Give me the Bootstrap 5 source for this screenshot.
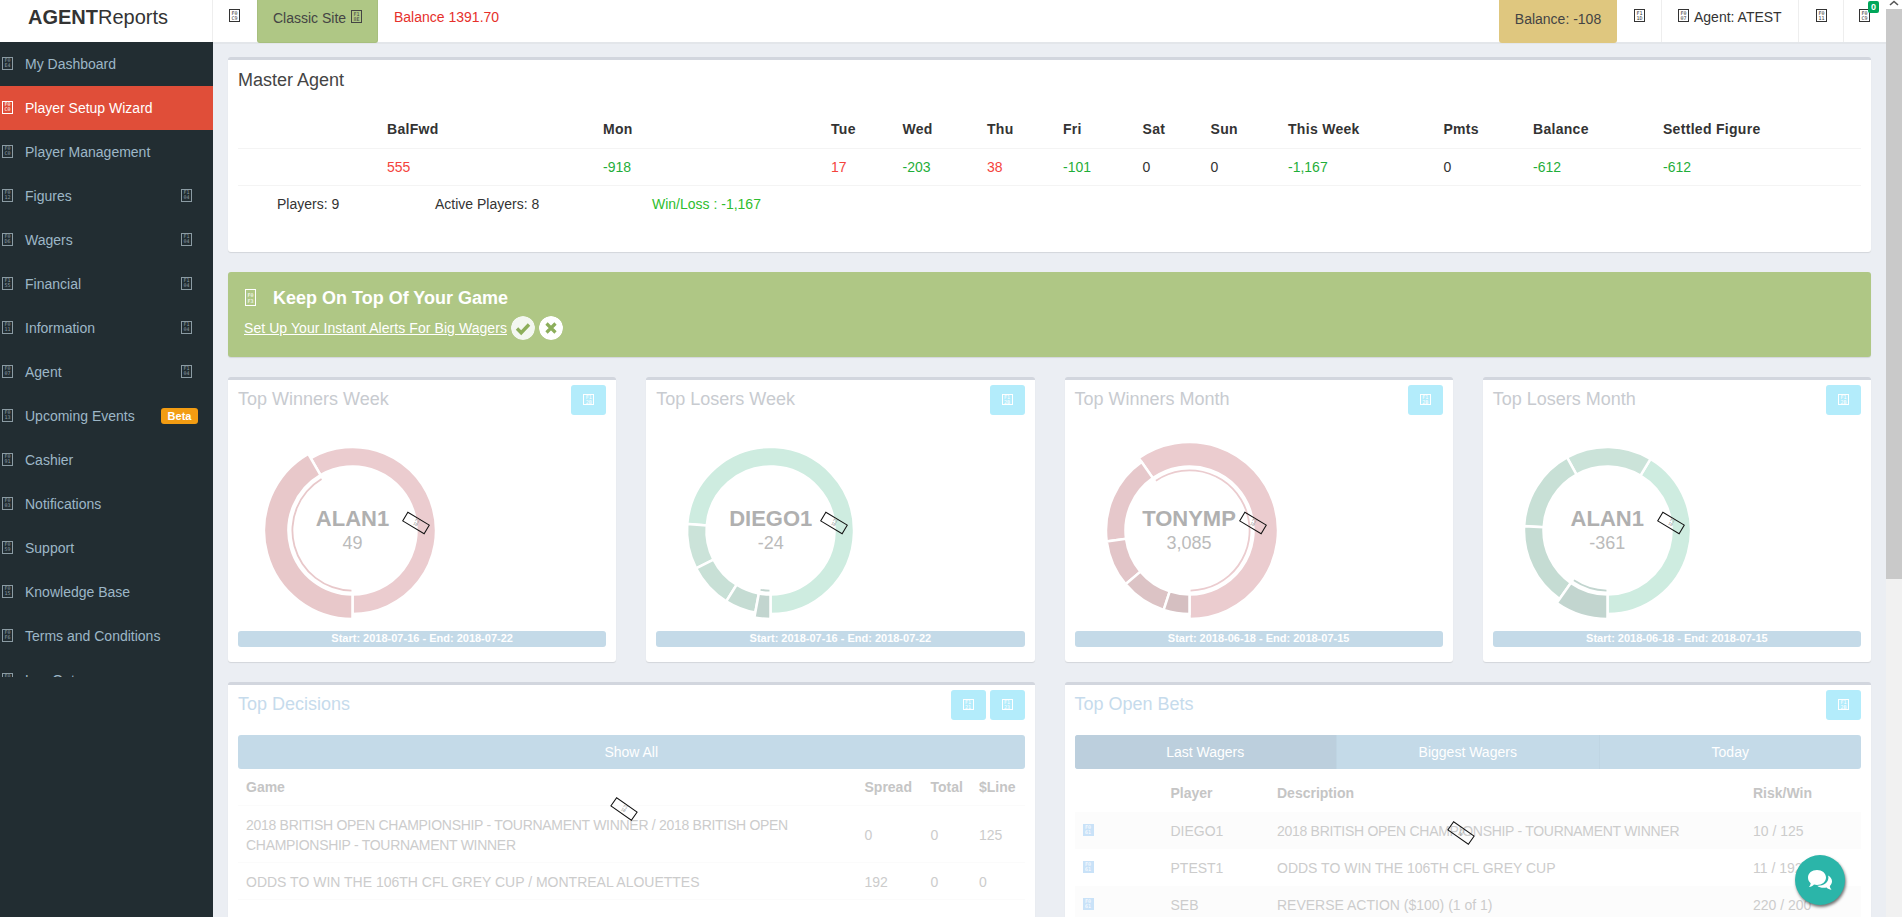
<!DOCTYPE html>
<html lang="en">
<head>
    <meta charset="UTF-8">
    <meta name="viewport" content="width=device-width, initial-scale=1.0">
    <title>AgentReports</title>
    <link href="https://cdn.jsdelivr.net/npm/bootstrap@5.3.3/dist/css/bootstrap.min.css" rel="stylesheet">
    <style>
        html, body { height: 100%; overflow: hidden; }
        body { font-family: "Liberation Sans", Arial, sans-serif; font-size: 14px; line-height: 20px; color: #333; background: #ebeef3; }

        /* missing icon font boxes */
        .tofu { display: inline-block; width: 11px; height: 13px; padding-top: .5px; border: 1px solid currentColor; font: 5px/5px "DejaVu Sans Mono", monospace; text-align: center; overflow: hidden; flex: none; }
        .tofu-flat { height: 11px; padding-top: 0; line-height: 4.5px; }
        .tofu-tall { height: 17px; padding-top: 3px; line-height: 5.5px; }

        .side-col { width: 213px; flex: none; background: #222d32; }
        .brand-box { height: 42px; background: #fff; font-size: 20px; line-height: 34px; padding-left: 28px; color: #333; border-right: 1px solid #eee; }
        .side-nav { height: 635px; overflow: hidden; }
        .side-link { height: 44px; flex: none; padding: 0 21px 0 2px; color: #9db7c7; gap: 12px; text-decoration: none; }
        .side-link.active-link { background: #e04e39; color: #fff; }
        .side-link .tofu { color: #8b9ba3; margin-bottom: 2px; }
        .side-link.active-link .tofu { color: #fff; }
        .beta-tag { background: #f39c12; color: #fff; font-size: 11px; font-weight: 700; line-height: 16px; width: 37px; text-align: center; border-radius: 3px; margin-right: -6px; }

        .top-bar { height: 44px; background: #fff; border-bottom: 2px solid #e3e6ea; flex: none; }
        .top-cell { height: 42px; width: 45px; padding: 0 0 8px 17px; gap: 5px; }
        .top-cell .tofu { margin-bottom: 3px; }
        .menu-cell { width: 44px; padding-left: 16px; }
        .agent-cell { width: 137px; padding-left: 16px; }
        .last-cell { width: 42px; padding-left: 15px; }
        .top-sep { border-right: 1px solid #eee; }
        .classic-btn { width: 121px; height: 43px; background: #afc785; border: 1px solid #a7bf7e; border-top: 0; border-radius: 0 0 3px 3px; color: #444; gap: 5px; padding-bottom: 6px; }
        .classic-btn .tofu { margin-bottom: 3px; }
        .bal-red { color: #e6302b; margin-left: 16px; padding-bottom: 8px; }
        .bal-box { width: 118px; height: 43px; background: #dfc77f; color: #444; border-radius: 0 0 3px 3px; padding-bottom: 6px; }
        .note-count { position: absolute; left: 24px; top: 1px; width: 11px; height: 12px; background: #00a65a; color: #fff; font-size: 9px; font-weight: 700; line-height: 12px; text-align: center; border-radius: 2px; }

        .page-body { padding: 13px 15px 0; overflow: hidden; flex: 1 1 auto; }
        .fake-scroll { width: 16px; flex: none; background: #f1f1f1; }
        .scroll-head { height: 9px; background: #fff; color: #666; }
        .scroll-thumb { height: 570px; background: #c9c9c9; }

        .box-card { --bs-card-border-width: 0; --bs-card-border-radius: 3px; --bs-card-inner-border-radius: 3px; border-top: 3px solid #d2d6de; box-shadow: 0 1px 1px rgba(0,0,0,.1); margin-bottom: 20px; padding: 10px; }
        .tool-card { padding-top: 5px; }
        .box-title { font-size: 18px; line-height: 20px; color: #444; }
        .pale-title { color: #c8cbd0; line-height: 28px; }
        .blue-title { color: #c6dbec; line-height: 28px; }

        .ma-table { margin: 21px 0 0; table-layout: fixed; width: 100%; }
        .ma-table th, .ma-table td { padding: 8px; height: 37px; color: #333; border-bottom: 1px solid #f4f4f4; }
        .ma-table th { letter-spacing: .3px; }
        .ma-table th:nth-child(1) { width: 141px; }
        .ma-table th:nth-child(2) { width: 216px; }
        .ma-table th:nth-child(3) { width: 228px; }
        .ma-table th:nth-child(4) { width: 71.5px; }
        .ma-table th:nth-child(5) { width: 84.5px; }
        .ma-table th:nth-child(6) { width: 76px; }
        .ma-table th:nth-child(7) { width: 79.6px; }
        .ma-table th:nth-child(8) { width: 68px; }
        .ma-table th:nth-child(9) { width: 77.4px; }
        .ma-table th:nth-child(10) { width: 155.5px; }
        .ma-table th:nth-child(11) { width: 89.5px; }
        .ma-table th:nth-child(12) { width: 130px; }
        .ma-table td.fig-red { color: #f4433c; }
        .ma-table td.fig-green { color: #1fae3a; }
        .ma-foot { margin-top: 8px; padding-left: 39px; padding-bottom: 28px; }
        .ma-foot span:nth-child(1) { width: 158px; }
        .ma-foot span:nth-child(2) { width: 217px; }
        .win-loss { color: #2ebd2e; }

        .promo-strip { background: #afc785; color: #fff; height: 85px; border-radius: 3px; margin-bottom: 20px; padding: 15px 16px; box-shadow: 0 1px 1px rgba(0,0,0,.1); }
        .promo-head { font-size: 18px; font-weight: 700; line-height: 22px; gap: 17px; padding-left: 1px; }
        .promo-link { color: #fff; text-decoration: underline; letter-spacing: .07px; }
        .promo-row { margin-top: 7px; gap: 4px; }
        .round-mark { width: 24px; height: 24px; border-radius: 50%; flex: none; }

        .dash-row { --bs-gutter-x: 30px; --bs-gutter-y: 0; }
        .tool-btn { width: 35px; height: 30px; background: #b3ecfb; border-radius: 3px; color: #fff; }
        .donut-wrap { position: relative; width: 229px; height: 216px; }
        .donut-name { position: absolute; left: 0; right: 0; top: 92px; text-align: center; font-size: 22px; font-weight: 700; line-height: 24px; color: #b0b0b0; }
        .donut-val { position: absolute; left: 0; right: 0; top: 116px; text-align: center; font-size: 18px; line-height: 24px; color: #bbb; }
        .date-bar { background: #c4dae8; color: #fff; height: 16px; margin-bottom: 5px; border-radius: 3px; text-align: center; font-size: 11px; font-weight: 700; line-height: 14px; }
        .spin-box { position: absolute; width: 26px; height: 11px; border: 1px solid #111; transform: translate(-50%, -50%) rotate(31deg); font: 4px/4px "DejaVu Sans Mono", monospace; color: #888; text-align: center; }
        .spin-a { left: 188px; top: 143px; }
        .spin-b { left: 396px; top: 124px; transform: translate(-50%, -50%) rotate(35deg); }
        .spin-c { left: 396px; top: 148px; transform: translate(-50%, -50%) rotate(35deg); }

        .wide-card { height: 400px; }
        .wide-bar { background: #c4dae8; color: #fff; height: 34px; margin-top: 15px; border-radius: 3px; line-height: 34px; text-align: center; overflow: hidden; }
        .wide-tab { flex: 1 1 0; border-left: 1px solid #bfd5e3; }
        .wide-tab:first-child { background: #bccfdd; border-left: 0; }
        .fade-table { table-layout: fixed; width: 100%; margin: 0; }
        .fade-table th, .fade-table td { padding: 8px; height: 37px; border-bottom: 1px solid #fbfbfb; color: #ccc; font-weight: 400; }
        .fade-table td { padding-top: 9px; padding-bottom: 7px; }
        .fade-table th { color: #c5c5c5; font-weight: 700; }
        .fade-table td.tight-text { letter-spacing: -.29px; }
        .dec-table th:nth-child(2) { width: 66px; }
        .dec-table th:nth-child(3) { width: 48.5px; }
        .dec-table th:nth-child(4) { width: 53.5px; }
        .bets-table { margin-top: 6px; }
        .bets-table th:nth-child(1) { width: 88px; }
        .bets-table th:nth-child(2) { width: 106.5px; }
        .bets-table th:nth-child(4) { width: 116px; }
        .bets-table th, .bets-table td { border-bottom: 0; }
        .bets-table tbody tr:nth-child(odd) td { background: #fcfcfc; }
        .bet-mark { color: #fff; background: #c9e2f8; border-color: #c9e2f8; height: 12px; padding-top: 0; }

        .chat-float { position: absolute; left: 1795px; top: 855px; width: 50px; height: 50px; border-radius: 50%; background: #2bb5a9; box-shadow: 1px 2px 3px rgba(0,0,0,.55); }
    </style>
</head>
<body>
<div class="d-flex vh-100 overflow-hidden">
    <aside class="side-col">
        <div class="brand-box"><b>AGENT</b>Reports</div>
        <nav class="side-nav d-flex flex-column">
            <a class="side-link d-flex align-items-center" href="#"><span class="tofu">F0<br>E4</span>My Dashboard</a>
            <a class="side-link active-link d-flex align-items-center" href="#"><span class="tofu">F0<br>C0</span>Player Setup Wizard</a>
            <a class="side-link d-flex align-items-center" href="#"><span class="tofu">F0<br>C0</span>Player Management</a>
            <a class="side-link d-flex align-items-center" href="#"><span class="tofu">F0<br>12</span>Figures<span class="tofu ms-auto">F1<br>04</span></a>
            <a class="side-link d-flex align-items-center" href="#"><span class="tofu">F0<br>D6</span>Wagers<span class="tofu ms-auto">F1<br>04</span></a>
            <a class="side-link d-flex align-items-center" href="#"><span class="tofu">F1<br>55</span>Financial<span class="tofu ms-auto">F1<br>04</span></a>
            <a class="side-link d-flex align-items-center" href="#"><span class="tofu">F0<br>11</span>Information<span class="tofu ms-auto">F1<br>04</span></a>
            <a class="side-link d-flex align-items-center" href="#"><span class="tofu">F0<br>07</span>Agent<span class="tofu ms-auto">F1<br>04</span></a>
            <a class="side-link d-flex align-items-center" href="#"><span class="tofu">F0<br>13</span>Upcoming Events<span class="beta-tag ms-auto">Beta</span></a>
            <a class="side-link d-flex align-items-center" href="#"><span class="tofu">F0<br>91</span>Cashier</a>
            <a class="side-link d-flex align-items-center" href="#"><span class="tofu">F0<br>03</span>Notifications</a>
            <a class="side-link d-flex align-items-center" href="#"><span class="tofu">F0<br>59</span>Support</a>
            <a class="side-link d-flex align-items-center" href="#"><span class="tofu">F0<br>15</span>Knowledge Base</a>
            <a class="side-link d-flex align-items-center" href="#"><span class="tofu">F0<br>F6</span>Terms and Conditions</a>
            <a class="side-link d-flex align-items-center" href="#"><span class="tofu">F0<br>8B</span>Log Out</a>
        </nav>
    </aside>

    <div class="d-flex flex-column flex-grow-1 overflow-hidden">
        <header class="top-bar d-flex">
            <div class="top-cell menu-cell d-flex align-items-center"><span class="tofu">F0<br>C9</span></div>
            <div class="classic-btn d-flex align-items-center justify-content-center">Classic Site <span class="tofu">F1<br>8E</span></div>
            <div class="bal-red d-flex align-items-center">Balance 1391.70</div>
            <div class="bal-box d-flex align-items-center justify-content-center ms-auto">Balance: -108</div>
            <div class="top-cell top-sep d-flex align-items-center"><span class="tofu">F1<br>1D</span></div>
            <div class="top-cell agent-cell top-sep d-flex align-items-center"><span class="tofu">F0<br>07</span>Agent: ATEST</div>
            <div class="top-cell top-sep d-flex align-items-center"><span class="tofu">F0<br>11</span></div>
            <div class="top-cell last-cell d-flex align-items-center position-relative"><span class="tofu">F0<br>C9</span><span class="note-count">0</span></div>
        </header>

        <main class="page-body position-relative">
            <section class="card box-card">
                <div class="box-title">Master Agent</div>
                <table class="ma-table">
                    <thead>
                        <tr><th></th><th>BalFwd</th><th>Mon</th><th>Tue</th><th>Wed</th><th>Thu</th><th>Fri</th><th>Sat</th><th>Sun</th><th>This Week</th><th>Pmts</th><th>Balance</th><th>Settled Figure</th></tr>
                    </thead>
                    <tbody>
                        <tr><td></td><td class="fig-red">555</td><td class="fig-green">-918</td><td class="fig-red">17</td><td class="fig-green">-203</td><td class="fig-red">38</td><td class="fig-green">-101</td><td>0</td><td>0</td><td class="fig-green">-1,167</td><td>0</td><td class="fig-green">-612</td><td class="fig-green">-612</td></tr>
                    </tbody>
                </table>
                <div class="ma-foot d-flex">
                    <span>Players: 9</span>
                    <span>Active Players: 8</span>
                    <span class="win-loss">Win/Loss : -1,167</span>
                </div>
            </section>

            <section class="promo-strip">
                <div class="promo-head d-flex align-items-center"><span class="tofu tofu-tall">F0<br>F3</span>Keep On Top Of Your Game</div>
                <div class="promo-row d-flex align-items-center">
                    <a class="promo-link" href="#">Set Up Your Instant Alerts For Big Wagers</a>
                    <svg class="round-mark" viewBox="0 0 24 24"><circle cx="12" cy="12" r="12" fill="#f3f7f1"/><path d="M6 12.500l4.200 4.200L18 8.500" fill="none" stroke="#8cae5b" stroke-width="3.400"/></svg>
                    <svg class="round-mark" viewBox="0 0 24 24"><circle cx="12" cy="12" r="12" fill="#fff"/><path d="M7.500 7.500l9 9M16.500 7.500l-9 9" fill="none" stroke="#8cae5b" stroke-width="3.200"/></svg>
                </div>
            </section>

            <div class="row dash-row" id="donut-row"></div>

            <div class="row dash-row">
                <div class="col-6">
                    <section class="card box-card tool-card wide-card position-relative">
                        <div class="d-flex justify-content-between">
                            <div class="box-title blue-title">Top Decisions</div>
                            <div class="d-flex gap-1">
                                <div class="tool-btn d-flex align-items-center justify-content-center"><span class="tofu tofu-flat">F1<br>21</span></div>
                                <div class="tool-btn d-flex align-items-center justify-content-center"><span class="tofu tofu-flat">F1<br>23</span></div>
                            </div>
                        </div>
                        <div class="wide-bar">Show All</div>
                        <table class="fade-table dec-table">
                            <thead><tr><th>Game</th><th>Spread</th><th>Total</th><th>$Line</th></tr></thead>
                            <tbody>
                                <tr><td class="tight-text">2018 BRITISH OPEN CHAMPIONSHIP - TOURNAMENT WINNER / 2018 BRITISH OPEN CHAMPIONSHIP - TOURNAMENT WINNER</td><td>0</td><td>0</td><td>125</td></tr>
                                <tr><td>ODDS TO WIN THE 106TH CFL GREY CUP / MONTREAL ALOUETTES</td><td>192</td><td>0</td><td>0</td></tr>
                            </tbody>
                        </table>
                        <span class="spin-box spin-b">F1<br>10</span>
                    </section>
                </div>
                <div class="col-6">
                    <section class="card box-card tool-card wide-card position-relative">
                        <div class="d-flex justify-content-between">
                            <div class="box-title blue-title">Top Open Bets</div>
                            <div class="tool-btn d-flex align-items-center justify-content-center"><span class="tofu tofu-flat">F1<br>2B</span></div>
                        </div>
                        <div class="wide-bar d-flex">
                            <div class="wide-tab">Last Wagers</div>
                            <div class="wide-tab">Biggest Wagers</div>
                            <div class="wide-tab">Today</div>
                        </div>
                        <table class="fade-table bets-table">
                            <thead><tr><th></th><th>Player</th><th>Description</th><th>Risk/Win</th></tr></thead>
                            <tbody>
                                <tr><td><span class="tofu bet-mark">F0<br>61</span></td><td>DIEGO1</td><td class="tight-text">2018 BRITISH OPEN CHAMPIONSHIP - TOURNAMENT WINNER</td><td>10 / 125</td></tr>
                                <tr><td><span class="tofu bet-mark">F0<br>61</span></td><td>PTEST1</td><td>ODDS TO WIN THE 106TH CFL GREY CUP</td><td>11 / 192</td></tr>
                                <tr><td><span class="tofu bet-mark">F0<br>61</span></td><td>SEB</td><td>REVERSE ACTION ($100) (1 of 1)</td><td>220 / 200</td></tr>
                            </tbody>
                        </table>
                        <span class="spin-box spin-c">F1<br>10</span>
                    </section>
                </div>
            </div>
        </main>
    </div>

    <div class="fake-scroll">
        <div class="scroll-head d-flex justify-content-center"><svg width="10" height="6" viewBox="0 0 10 6"><path d="M1 5l4-3.500L9 5" fill="none" stroke="#555" stroke-width="1.600"/></svg></div>
        <div class="scroll-thumb"></div>
    </div>

    <div class="chat-float d-flex align-items-center justify-content-center">
        <svg width="28" height="26" viewBox="0 0 28 26">
            <path d="M11 3c5 0 9 3 9 7.500S16 18 11 18c-1 0-2-.1-3-.4C6.800 19 5 20 3 20c1-1.200 1.600-2.500 1.700-3.800C3 14.800 2 12.800 2 10.500 2 6 6 3 11 3z" fill="#fff"/>
            <path d="M22 8.500c2.400 1.300 4 3.400 4 5.800 0 1.800-.8 3.400-2.200 4.700.1 1.300.7 2.600 1.700 3.700-2-.1-3.700-1-4.900-2.300-1 .3-2 .4-3 .4-2.500 0-4.800-.8-6.400-2.100 5.800.4 11.600-3.200 11.200-8.500-.1-.6-.2-1.100-.4-1.700z" fill="#fff"/>
        </svg>
    </div>
</div>

<script>
    const CX = 114.5, CY = 115.5;

    // clockwise degrees from 12 o'clock
    function point(r, deg) {
        const a = deg * Math.PI / 180;
        return (CX + r * Math.sin(a)).toFixed(2) + ' ' + (CY - r * Math.cos(a)).toFixed(2);
    }

    function arcPath(start, end, rOut, rIn) {
        const big = end - start > 180 ? 1 : 0;
        return `M${point(rOut, start)}A${rOut} ${rOut} 0 ${big} 1 ${point(rOut, end)}L${point(rIn, end)}A${rIn} ${rIn} 0 ${big} 0 ${point(rIn, start)}Z`;
    }

    function donutSvg(slices) {
        let out = '';
        slices.forEach(s => {
            const rOut = s.selected ? 88.5 : 83.5;
            out += `<path d="${arcPath(s.from, s.to, rOut, 64)}" fill="${s.color}" stroke="#fff" stroke-width="2.5"/>`;
            if (s.selected) {
                out += `<path d="${arcPath(s.from + 1, s.to - 1, 61, 59.2)}" fill="${s.color}"/>`;
            }
        });
        return `<svg width="229" height="216" viewBox="0 0 229 216">${out}</svg>`;
    }

    const widgets = [
        { title: 'Top Winners Week', btn: ['F1', '2B'], name: 'ALAN1', val: '49', dates: 'Start: 2018-07-16 - End: 2018-07-22', slices: [
            { from: -30, to: 180, color: '#ebcccf' },
            { from: 180, to: 330, color: '#e8c8ca', selected: true } ] },
        { title: 'Top Losers Week', btn: ['F1', '2B'], name: 'DIEGO1', val: '-24', dates: 'Start: 2018-07-16 - End: 2018-07-22', slices: [
            { from: -85.5, to: 180, color: '#ceece0' },
            { from: 243, to: 274.5, color: '#cbe3d9' },
            { from: 212, to: 243, color: '#c8e0d6' },
            { from: 190.5, to: 212, color: '#c5dcd3' },
            { from: 180, to: 190.5, color: '#c2d5cf', selected: true } ] },
        { title: 'Top Winners Month', btn: ['F1', '2B'], name: 'TONYMP', val: '3,085', dates: 'Start: 2018-06-18 - End: 2018-07-15', slices: [
            { from: -35, to: 180, color: '#ebcccf', selected: true },
            { from: 262.5, to: 325, color: '#e6c8cb' },
            { from: 230, to: 262.5, color: '#e2c5c8' },
            { from: 198, to: 230, color: '#dcc3c5' },
            { from: 180, to: 198, color: '#d5bfc1' } ] },
        { title: 'Top Losers Month', btn: ['F1', '2B'], name: 'ALAN1', val: '-361', dates: 'Start: 2018-06-18 - End: 2018-07-15', slices: [
            { from: 31, to: 180, color: '#ceece0' },
            { from: -29, to: 31, color: '#cbe3d9' },
            { from: 273, to: 331, color: '#c8e0d6' },
            { from: 215, to: 273, color: '#c5dcd3' },
            { from: 180, to: 215, color: '#c2d5cf', selected: true } ] }
    ];

    document.getElementById('donut-row').innerHTML = widgets.map(w => `
        <div class="col-3">
            <section class="card box-card tool-card position-relative">
                <div class="d-flex justify-content-between">
                    <div class="box-title pale-title">${w.title}</div>
                    <div class="tool-btn d-flex align-items-center justify-content-center"><span class="tofu tofu-flat">${w.btn[0]}<br>${w.btn[1]}</span></div>
                </div>
                <div class="donut-wrap">
                    ${donutSvg(w.slices)}
                    <div class="donut-name">${w.name}</div>
                    <div class="donut-val">${w.val}</div>
                </div>
                <div class="date-bar">${w.dates}</div>
                <span class="spin-box spin-a">F1<br>10</span>
            </section>
        </div>`).join('');
</script>
<script src="https://cdn.jsdelivr.net/npm/bootstrap@5.3.3/dist/js/bootstrap.bundle.min.js"></script>
</body>
</html>
